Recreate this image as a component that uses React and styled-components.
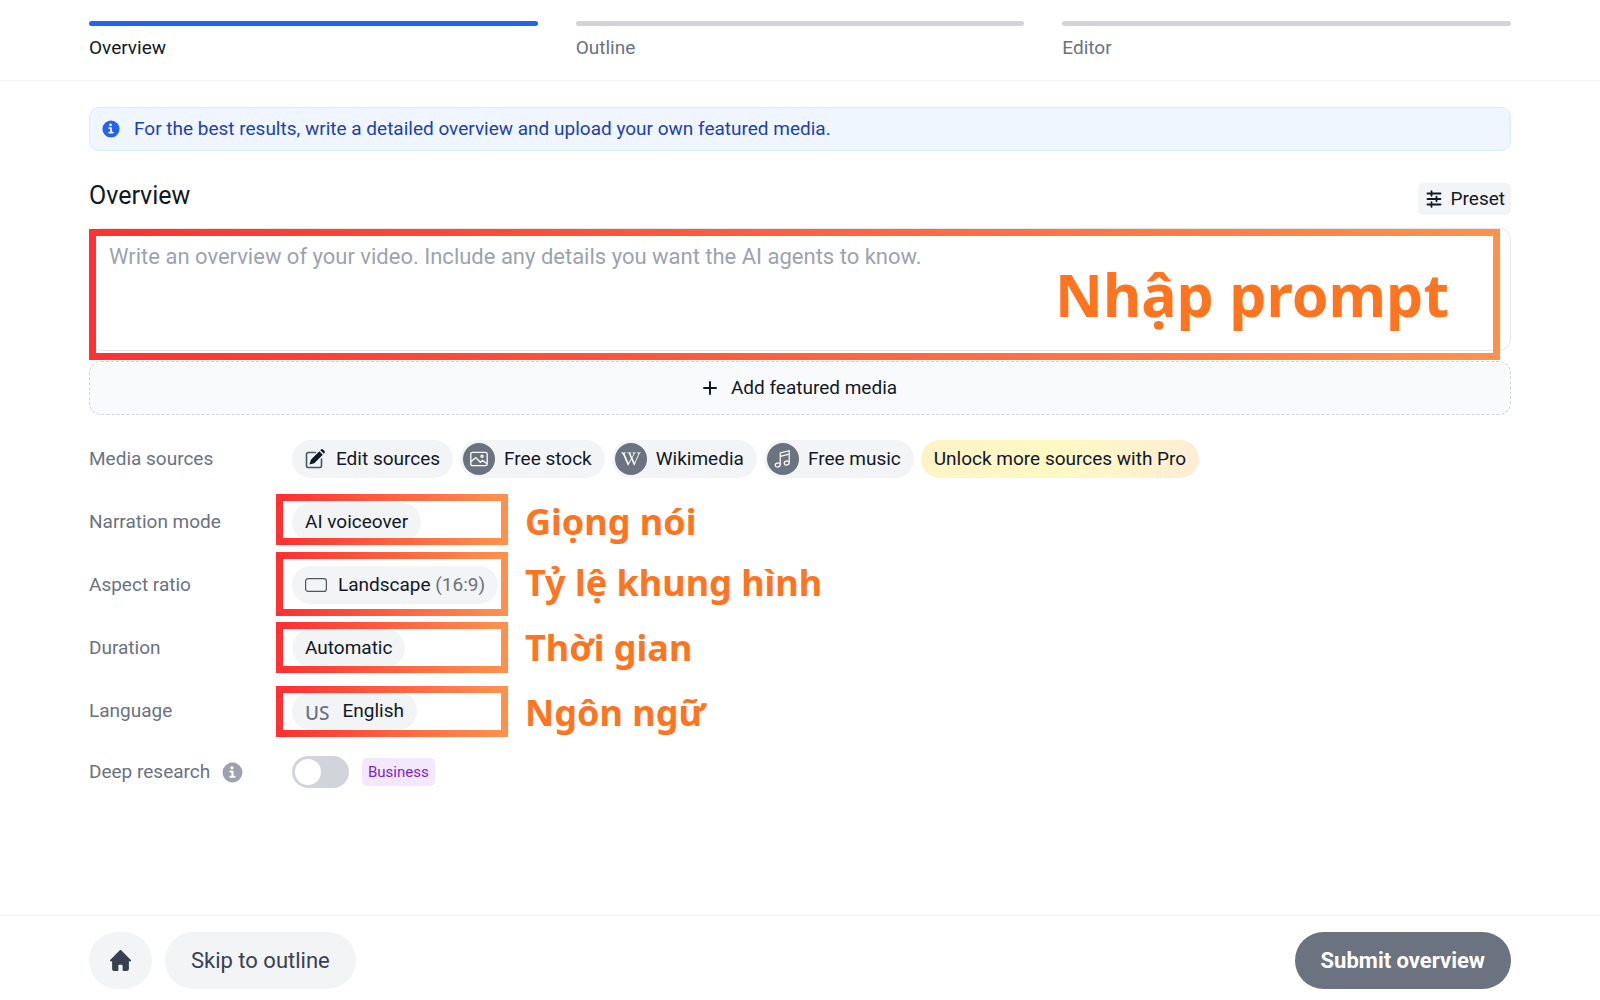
import React from "react";
import styled, { createGlobalStyle, css } from "styled-components";
import { FaWikipediaW } from "react-icons/fa";

const Global = createGlobalStyle`
  *, *::before, *::after { box-sizing: border-box; }
  body { margin: 0; background: #fff; color: #111827; font-family: Roboto, "Liberation Sans", sans-serif; font-size: 19px; line-height: 28px; }
  button, input, textarea { font: inherit; color: inherit; margin: 0; }
  button { border: 0; cursor: pointer; }
  h1, p, ol { margin: 0; padding: 0; font-weight: 400; }
  svg { display: block; flex: none; }
`;

const Page = styled.div`
  min-height: 100vh;
  display: flex;
  flex-direction: column;
`;

const Container = styled.div`
  padding: 0 89px;
`;

const Header = styled.header`
  border-bottom: 1px solid #f3f4f6;
  padding: 21px 0 18px;
`;

const Steps = styled.ol`
  list-style: none;
  display: grid;
  grid-template-columns: repeat(3, 1fr);
  gap: 38px;
`;

const Step = styled.li`
  color: ${(p) => (p.$active ? "#111827" : "#6b7280")};
  &::before {
    content: "";
    display: block;
    height: 5px;
    margin-bottom: 8px;
    border-radius: 3px;
    background: ${(p) => (p.$active ? "#2563eb" : "#d1d5db")};
  }
`;

const Main = styled.main`
  flex: 1;
`;

const Notice = styled.p`
  display: flex;
  align-items: center;
  gap: 14px;
  margin-top: 26px;
  padding: 7px 12px;
  border: 1px solid #dbeafe;
  border-radius: 10px;
  background: #eff6ff;
  color: #1e40af;
  svg { color: #2563eb; }
`;

const SectionHead = styled.div`
  display: flex;
  align-items: center;
  justify-content: space-between;
  margin: 26px 0 13px;
`;

const Title = styled.h1`
  font-size: 25px;
  line-height: 38px;
`;

const PresetButton = styled.button`
  display: flex;
  align-items: center;
  gap: 9px;
  margin-top: 6px;
  padding: 2px 6px 2px 8px;
  border-radius: 5px;
  background: #f3f4f6;
`;

const Annotated = styled.div`
  position: relative;
`;

const Highlight = styled.div`
  position: absolute;
  pointer-events: none;
  top: ${(p) => p.$top}px;
  bottom: ${(p) => p.$bottom}px;
  left: ${(p) => p.$left}px;
  ${(p) => (p.$width ? css`width: ${p.$width}px;` : css`right: ${p.$right}px;`)}
  border: 7px solid;
  border-image: linear-gradient(90deg, #ff3131, #ff914d) 1;
`;

const Note = styled.span`
  position: absolute;
  pointer-events: none;
  white-space: nowrap;
  color: #ff751f;
  font-family: "Noto Sans", "Open Sans", sans-serif;
  font-weight: 700;
  ${(p) =>
    p.$large
      ? css`font-size: 59px; line-height: 80px; right: 62px; top: 26px;`
      : css`font-size: 36px; line-height: 48px; left: 233px; top: ${p.$top}px;`}
`;

const Prompt = styled.textarea`
  display: block;
  width: 100%;
  height: 123px;
  padding: 13px 19px;
  border: 1px solid #e5e7eb;
  border-radius: 12px;
  background: #fff;
  resize: none;
  font-size: 22px;
  line-height: 30px;
  &::placeholder { color: #9ca3af; opacity: 1; }
`;

const AddMedia = styled.button`
  display: flex;
  align-items: center;
  justify-content: center;
  gap: 14px;
  width: 100%;
  margin-top: 10px;
  padding: 12px;
  border: 1px dashed #d1d5db;
  border-radius: 12px;
  background: #f9fafb;
`;

const Settings = styled.div`
  display: flex;
  flex-direction: column;
  gap: 25px;
  margin-top: 25px;
`;

const Row = styled.div`
  display: grid;
  grid-template-columns: 203px 1fr;
  align-items: center;
  min-height: 34px;
`;

const RowLabel = styled.label`
  display: flex;
  align-items: center;
  gap: 12px;
  color: #6b7280;
  svg { color: #9ca3af; }
`;

const Value = styled.div`
  position: relative;
  display: flex;
  flex-wrap: wrap;
  align-items: center;
  gap: ${(p) => p.$gap || 7}px;
`;

const Chip = styled.button`
  display: flex;
  align-items: center;
  gap: ${(p) => (p.$badge ? 9 : 11)}px;
  padding: ${(p) => (p.$badge ? "3px 13px 3px 3px" : "5px 13px")};
  border-radius: 19px;
  background: ${(p) => (p.$pro ? "linear-gradient(90deg, #fef3c7, #fef9c3, #ffedd5)" : "#f3f4f6")};
`;

const Badge = styled.span`
  display: grid;
  place-items: center;
  width: 32px;
  height: 32px;
  border-radius: 50%;
  background: #6b7280;
  color: #fff;
`;

const Muted = styled.span`
  color: #6b7280;
`;

const Region = styled.span`
  padding: 4px 2px 0 0;
  color: #6b7280;
  font-family: "Noto Sans", sans-serif;
  font-weight: 500;
  line-height: 24px;
`;

const Toggle = styled.input`
  appearance: none;
  width: 57px;
  height: 32px;
  padding: 3px;
  border-radius: 16px;
  background: #d1d5db;
  &::before {
    content: "";
    display: block;
    width: 26px;
    height: 26px;
    border-radius: 50%;
    background: #fff;
  }
  &:checked { background: #2563eb; }
  &:checked::before { margin-left: auto; }
`;

const Plan = styled.span`
  padding: 0 6px;
  border-radius: 5px;
  background: #f3e8ff;
  color: #7e22ce;
  font-size: 15px;
`;

const Footer = styled.footer`
  border-top: 1px solid #f3f4f6;
  padding: 16px 0 11px;
`;

const Actions = styled.div`
  display: flex;
  gap: 13px;
`;

const Pill = styled.button`
  display: flex;
  align-items: center;
  height: 57px;
  padding: 0 ${(p) => (p.$icon ? 21 : 26)}px;
  border-radius: 29px;
  font-size: 22px;
  background: ${(p) => (p.$primary ? "#6b7280" : "#f3f4f6")};
  color: ${(p) => (p.$primary ? "#fff" : "#374151")};
  font-weight: ${(p) => (p.$primary ? 700 : 400)};
  margin-left: ${(p) => (p.$primary ? "auto" : 0)};
`;

const InfoIcon = ({ size }) => (
  <svg width={size} height={size} viewBox="0 0 20 20" fill="currentColor" aria-hidden="true">
    <path d="M10 .5a9.5 9.5 0 1 0 9.5 9.5A9.51 9.51 0 0 0 10 .5ZM9.5 4a1.5 1.5 0 1 1 0 3 1.5 1.5 0 0 1 0-3ZM12 15H8a1 1 0 0 1 0-2h1v-3H8a1 1 0 0 1 0-2h2a1 1 0 0 1 1 1v4h1a1 1 0 0 1 0 2Z" />
  </svg>
);

const SlidersIcon = () => (
  <svg width="16" height="18" viewBox="0 0 16 18" fill="none" stroke="currentColor" strokeWidth="1.8" strokeLinecap="round" aria-hidden="true">
    <path d="M1.500 3.500h2.500M5.500 3.500h9M5.500 1.200v4.600M1.500 9h8M11.500 9h3M10.500 6.700v4.600M1.500 14.500h2.500M5.500 14.500h9M5.500 12.200v4.600" />
  </svg>
);

const EditIcon = () => (
  <svg width="20" height="20" viewBox="0 0 20 20" aria-hidden="true">
    <path d="M10.500 3.500H3.200A1.700 1.700 0 0 0 1.500 5.200v11.600a1.700 1.700 0 0 0 1.700 1.700h11.600a1.700 1.700 0 0 0 1.700-1.700V10" fill="none" stroke="#4b5563" strokeWidth="1.600" strokeLinecap="round" />
    <path d="m14.300 2.200 3.500 3.500-8.500 8.500-4.800 1.400 1.400-4.900ZM15.300 1.200l.6-.6a1.500 1.500 0 0 1 2.100 0l1.400 1.400a1.500 1.500 0 0 1 0 2.100l-.6.600Z" fill="#111827" />
  </svg>
);

const ImageIcon = () => (
  <svg width="18" height="16" viewBox="0 0 18 16" fill="none" stroke="currentColor" strokeWidth="1.300" strokeLinejoin="round" aria-hidden="true">
    <rect x="0.800" y="1.300" width="16.400" height="13.400" rx="1.700" />
    <path d="m1.200 10.600 4.600-4 4.600 4.600 2-1.800 4.400 3.100" />
    <circle cx="12" cy="5.200" r="1.100" />
  </svg>
);

const MusicIcon = () => (
  <svg width="18" height="20" viewBox="0 0 18 20" fill="none" stroke="currentColor" strokeWidth="1.2" aria-hidden="true">
    <ellipse cx="3.700" cy="16" rx="2.500" ry="2" transform="rotate(-15 3.700 16)" />
    <ellipse cx="12.700" cy="14" rx="2.500" ry="2" transform="rotate(-15 12.700 14)" />
    <path d="M6.200 15.600V4L15.200 1.700V13.600M6.200 7.400l9-2.300" />
  </svg>
);

const HomeIcon = () => (
  <svg width="21" height="21" viewBox="0 0 20 20" fill="currentColor" aria-hidden="true">
    <path d="m19.707 9.293-2-2-7-7a1 1 0 0 0-1.414 0l-7 7-2 2a1 1 0 0 0 1.414 1.414L2 10.414V18a2 2 0 0 0 2 2h3a1 1 0 0 0 1-1v-4a1 1 0 0 1 1-1h2a1 1 0 0 1 1 1v4a1 1 0 0 0 1 1h3a2 2 0 0 0 2-2v-7.586l.293.293a1 1 0 0 0 1.414-1.414Z" />
  </svg>
);

const settings = [
  { id: "narration", label: "Narration mode", content: "AI voiceover", note: "Giọng nói", frame: [-9, -4], noteTop: -5 },
  {
    id: "ratio",
    label: "Aspect ratio",
    content: (
      <>
        <svg width="22" height="14" viewBox="0 0 22 14" fill="none" stroke="#4b5563" strokeWidth="1.200" aria-hidden="true">
          <rect x="0.600" y="0.600" width="20.800" height="12.800" rx="2.500" />
        </svg>
        <span>Landscape <Muted>(16:9)</Muted></span>
      </>
    ),
    note: "Tỷ lệ khung hình",
    frame: [-14, -12],
    noteTop: -7,
  },
  { id: "duration", label: "Duration", content: "Automatic", note: "Thời gian", frame: [-7, -6], noteTop: -5 },
  { id: "language", label: "Language", content: <><Region>US</Region>English</>, note: "Ngôn ngữ", frame: [-6, -7], noteTop: -3 },
];

export default function App() {
  return (
    <Page>
      <Global />
      <Header>
        <Container>
          <Steps>
            <Step $active aria-current="step">Overview</Step>
            <Step>Outline</Step>
            <Step>Editor</Step>
          </Steps>
        </Container>
      </Header>

      <Main>
        <Container>
          <Notice>
            <InfoIcon size={18} />
            For the best results, write a detailed overview and upload your own featured media.
          </Notice>

          <SectionHead>
            <Title>Overview</Title>
            <PresetButton type="button"><SlidersIcon />Preset</PresetButton>
          </SectionHead>

          <Annotated>
            <Prompt aria-label="Overview" placeholder="Write an overview of your video. Include any details you want the AI agents to know." />
            <Highlight $top={1} $bottom={-9} $left={0} $right={11} />
            <Note $large>Nhập prompt</Note>
          </Annotated>

          <AddMedia type="button">
            <svg width="14" height="14" viewBox="0 0 14 14" fill="none" stroke="currentColor" strokeWidth="2" strokeLinecap="round" aria-hidden="true">
              <path d="M7 1v12M1 7h12" />
            </svg>
            Add featured media
          </AddMedia>

          <Settings>
            <Row>
              <RowLabel htmlFor="sources">Media sources</RowLabel>
              <Value>
                <Chip type="button" id="sources"><EditIcon />Edit sources</Chip>
                <Chip type="button" $badge><Badge><ImageIcon /></Badge>Free stock</Chip>
                <Chip type="button" $badge><Badge><FaWikipediaW size={20} /></Badge>Wikimedia</Chip>
                <Chip type="button" $badge><Badge><MusicIcon /></Badge>Free music</Chip>
                <Chip type="button" $pro>Unlock more sources with Pro</Chip>
              </Value>
            </Row>
            {settings.map((s) => (
              <Row key={s.id}>
                <RowLabel htmlFor={s.id}>{s.label}</RowLabel>
                <Value>
                  <Chip type="button" id={s.id}>{s.content}</Chip>
                  <Highlight $top={s.frame[0]} $bottom={s.frame[1]} $left={-16} $width={232} />
                  <Note $top={s.noteTop}>{s.note}</Note>
                </Value>
              </Row>
            ))}
            <Row>
              <RowLabel htmlFor="research">Deep research <InfoIcon size={21} /></RowLabel>
              <Value $gap={13}>
                <Toggle type="checkbox" role="switch" id="research" />
                <Plan>Business</Plan>
              </Value>
            </Row>
          </Settings>
        </Container>
      </Main>

      <Footer>
        <Container>
          <Actions>
            <Pill type="button" $icon aria-label="Home"><HomeIcon /></Pill>
            <Pill type="button">Skip to outline</Pill>
            <Pill type="button" $primary>Submit overview</Pill>
          </Actions>
        </Container>
      </Footer>
    </Page>
  );
}
